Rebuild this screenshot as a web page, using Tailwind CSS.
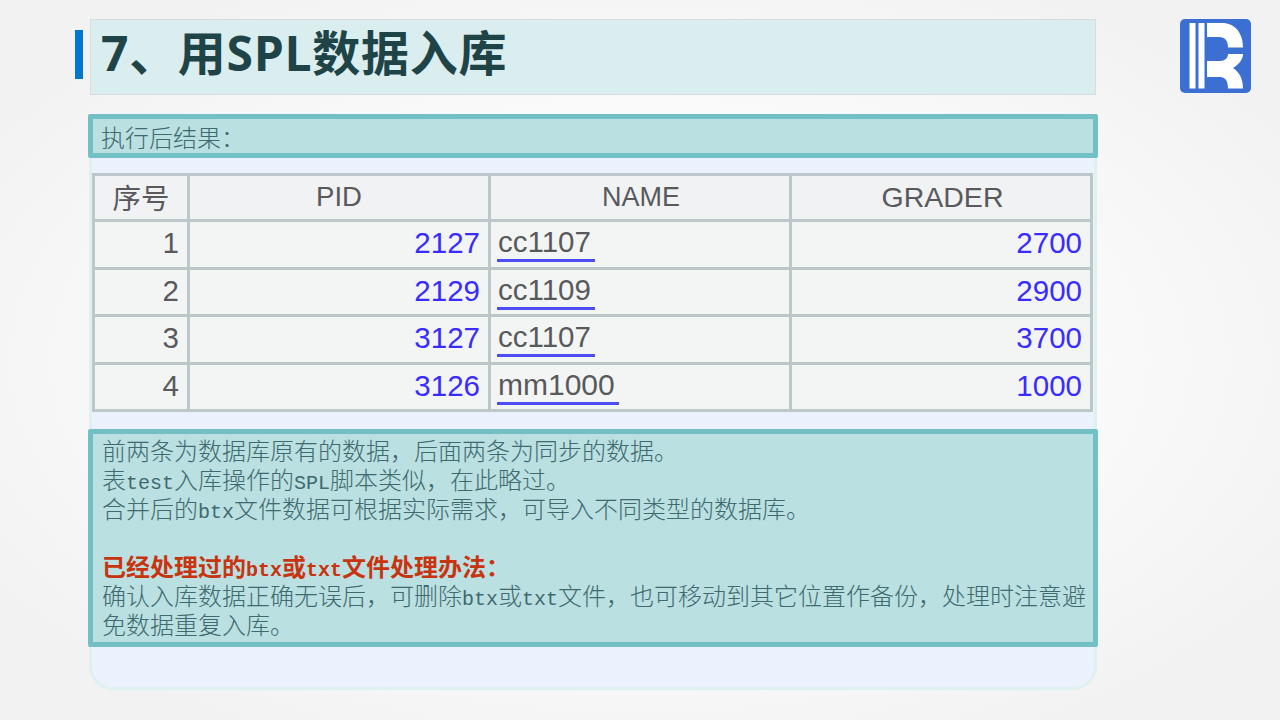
<!DOCTYPE html>
<html lang="zh-CN">
<head>
    <meta charset="UTF-8" />
    <title>用SPL数据入库</title>
    <script src="https://cdn.jsdelivr.net/npm/@tailwindcss/browser@4"></script>
</head>
<body class="w-[1280px] h-[720px] overflow-hidden bg-[radial-gradient(ellipse_at_center,#ffffff_0%,#fbfbfb_45%,#f2f2f2_85%)] font-['Noto_Sans_CJK_SC',sans-serif]">
    <!-- Title row -->
    <div class="flex items-start pt-[19px] pl-[75px] h-[114px]">
        <div class="w-[8px] h-[49px] mt-[11px] mr-[7px] bg-[#0077cc]"></div>
        <div class="w-[1006px] h-[76px] pl-[10px] border border-[#d9dcdc] bg-[#daedef] text-[48px] leading-[66px] tracking-[0.7px] font-bold text-[#1f4448] font-['Open_Sans','Noto_Sans_CJK_SC',sans-serif]">7、用SPL数据入库</div>
        <svg class="ml-[84px] w-[71px] h-[74px]" viewBox="0 0 71 74">
            <rect width="71" height="74" rx="5" fill="#3b6fd2" />
            <rect x="9.5" y="4" width="6" height="65.5" fill="#fff" />
            <rect x="18.5" y="4" width="6" height="65.5" fill="#fff" />
            <path d="M27 4H42C55 4 63 14 63 28.5H48C48 22 45 18 39 18H27Z" fill="#fff" />
            <path d="M27 42H40C45 42 48 39 48 35H63C63 41 58 46 53 49C59 53 63 59 63 69.5H48C48 63 46 58 40 58H27Z" fill="#fff" />
        </svg>
    </div>

    <!-- Card -->
    <div class="ml-[89px] w-[1008px] h-[576px] border-[3px] border-t-0 border-[#dff0f0] rounded-b-[24px] bg-[#ebf2fd] text-[24px] leading-[28.8px] text-[#3f6a6e] font-light">
        <div class="-mx-[4px] h-[44px] px-[8px] pt-[4px] border-[5px] border-[#72bfc5] rounded-[2px] bg-[#bae0e2]">执行后结果：</div>

        <table class="mt-[15px] w-[998px] table-fixed border-collapse bg-[#f3f5f5] text-[29.5px] leading-[36px] font-normal text-[#59595c] font-['Liberation_Sans',sans-serif]">
            <colgroup>
                <col class="w-[95px]" />
                <col class="w-[301px]" />
                <col class="w-[301px]" />
                <col class="w-[301px]" />
            </colgroup>
            <thead>
                <tr class="h-[46px] bg-[#f0f2f4] text-[27.5px]">
                    <th class="border-[3px] border-[#bcc7c9] pb-[2px] font-normal text-[28.5px] font-['Noto_Sans_CJK_SC',sans-serif]">序号</th>
                    <th class="border-[3px] border-[#bcc7c9] pb-[2px] font-normal">PID</th>
                    <th class="border-[3px] border-[#bcc7c9] pb-[2px] pl-[2px] font-normal text-[27px]">NAME</th>
                    <th class="border-[3px] border-[#bcc7c9] pb-[2px] pl-[3px] font-normal text-[28.5px]">GRADER</th>
                </tr>
            </thead>
            <tbody>
                <tr class="h-[47.5px]">
                    <td class="border-[3px] border-[#bcc7c9] text-right pr-[8px] pb-[2px]">1</td>
                    <td class="border-[3px] border-[#bcc7c9] text-right pr-[8px] pb-[2px] text-[#3a2bff]">2127</td>
                    <td class="border-[3px] border-[#bcc7c9] pl-[6px] pb-[2px]"><span class="block w-[98px] h-[38px] leading-[36px] pl-[1px] border-b-[3px] border-[#4d4df5]">cc1107</span></td>
                    <td class="border-[3px] border-[#bcc7c9] text-right pr-[8px] pb-[2px] text-[#3a2bff]">2700</td>
                </tr>
                <tr class="h-[47.5px]">
                    <td class="border-[3px] border-[#bcc7c9] text-right pr-[8px] pb-[2px]">2</td>
                    <td class="border-[3px] border-[#bcc7c9] text-right pr-[8px] pb-[2px] text-[#3a2bff]">2129</td>
                    <td class="border-[3px] border-[#bcc7c9] pl-[6px] pb-[2px]"><span class="block w-[98px] h-[38px] leading-[36px] pl-[1px] border-b-[3px] border-[#4d4df5]">cc1109</span></td>
                    <td class="border-[3px] border-[#bcc7c9] text-right pr-[8px] pb-[2px] text-[#3a2bff]">2900</td>
                </tr>
                <tr class="h-[47.5px]">
                    <td class="border-[3px] border-[#bcc7c9] text-right pr-[8px] pb-[2px]">3</td>
                    <td class="border-[3px] border-[#bcc7c9] text-right pr-[8px] pb-[2px] text-[#3a2bff]">3127</td>
                    <td class="border-[3px] border-[#bcc7c9] pl-[6px] pb-[2px]"><span class="block w-[98px] h-[38px] leading-[36px] pl-[1px] border-b-[3px] border-[#4d4df5]">cc1107</span></td>
                    <td class="border-[3px] border-[#bcc7c9] text-right pr-[8px] pb-[2px] text-[#3a2bff]">3700</td>
                </tr>
                <tr class="h-[47.5px]">
                    <td class="border-[3px] border-[#bcc7c9] text-right pr-[8px] pb-[2px]">4</td>
                    <td class="border-[3px] border-[#bcc7c9] text-right pr-[8px] pb-[2px] text-[#3a2bff]">3126</td>
                    <td class="border-[3px] border-[#bcc7c9] pl-[6px] pb-[2px]"><span class="block w-[122px] h-[38px] leading-[36px] pl-[1px] border-b-[3px] border-[#4d4df5] text-[30px]">mm1000</span></td>
                    <td class="border-[3px] border-[#bcc7c9] text-right pr-[8px] pb-[2px] text-[#3a2bff]">1000</td>
                </tr>
            </tbody>
        </table>

        <div class="-mx-[4px] mt-[17px] h-[218px] pl-[9px] pr-[6px] pt-[2px] border-[5px] border-[#72bfc5] rounded-[2px] bg-[#bae0e2]">
            <p>前两条为数据库原有的数据，后面两条为同步的数据。</p>
            <p>表<span class="leading-none font-['Liberation_Mono',monospace] text-[20px]">test</span>入库操作的<span class="leading-none font-['Liberation_Mono',monospace] text-[20px]">SPL</span>脚本类似，在此略过。</p>
            <p>合并后的<span class="leading-none font-['Liberation_Mono',monospace] text-[20px]">btx</span>文件数据可根据实际需求，可导入不同类型的数据库。</p>
            <p class="h-[28.8px]"></p>
            <p class="font-bold text-[#c8340f]">已经处理过的<span class="leading-none font-['Liberation_Mono',monospace] text-[20px]">btx</span>或<span class="leading-none font-['Liberation_Mono',monospace] text-[20px]">txt</span>文件处理办法：</p>
            <p>确认入库数据正确无误后，可删除<span class="leading-none font-['Liberation_Mono',monospace] text-[20px]">btx</span>或<span class="leading-none font-['Liberation_Mono',monospace] text-[20px]">txt</span>文件，也可移动到其它位置作备份，处理时注意避免数据重复入库。</p>
        </div>
    </div>
</body>
</html>
